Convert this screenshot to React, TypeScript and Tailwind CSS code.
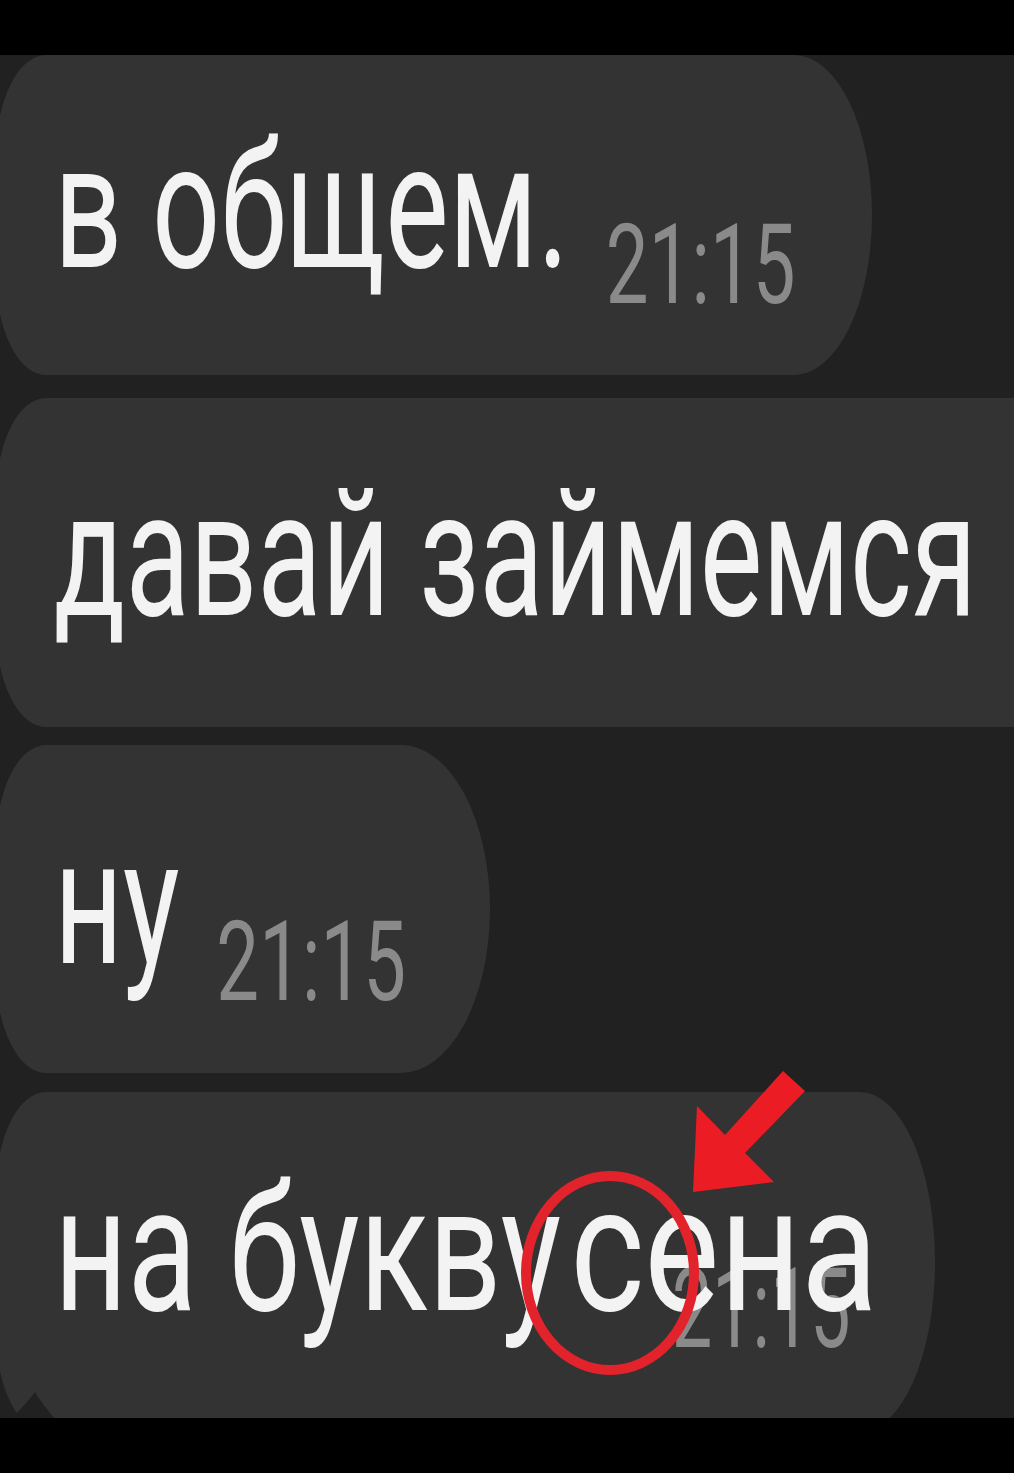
import React from 'react';

const bubbleBase = 'relative shrink-0 ml-[-4px] bg-[#333333] rounded-tl-[50px_100px] rounded-bl-[50px_100px]';
const rowBase = 'relative flex items-baseline whitespace-nowrap w-max origin-left';
const msgText = 'text-[176px] leading-none text-[#f3f3f3]';
const timeText = 'text-[112px] leading-none text-[#8a8a8a]';

export default function App() {
    return (
        <div className="w-[1014px] h-[1473px] bg-black overflow-hidden flex flex-col font-['Roboto','Noto_Sans',sans-serif]">
            <div className="h-[55px] shrink-0 bg-black" />

            <div className="flex-1 min-h-0 bg-[#212121] overflow-hidden flex flex-col">
                {/* в общем. */}
                <div className={`${bubbleBase} w-[876px] h-[320px] pt-[64px] pl-[58px] rounded-tr-[78px_160px] rounded-br-[78px_160px]`}>
                    <div className={`${rowBase} scale-x-[0.68] gap-[54px]`}>
                        <span className={msgText}>в общем.</span>
                        <span className={`${timeText} translate-y-[36px]`}>21:15</span>
                    </div>
                </div>

                {/* давай займемся */}
                <div className={`${bubbleBase} mt-[23px] w-[1100px] h-[329px] pt-[69px] pl-[58px]`}>
                    <div className={`${rowBase} scale-x-[0.672]`}>
                        <span className={msgText}>давай займемся</span>
                    </div>
                </div>

                {/* ну */}
                <div className={`${bubbleBase} mt-[18px] w-[494px] h-[328px] pt-[70px] pl-[58px] rounded-tr-[89px_164px] rounded-br-[89px_164px]`}>
                    <div className={`${rowBase} scale-x-[0.68] gap-[54px]`}>
                        <span className={msgText}>ну</span>
                        <span className={`${timeText} translate-y-[37px]`}>21:15</span>
                    </div>
                </div>

                {/* на букву сена */}
                <div className={`${bubbleBase} mt-[19px] w-[939px] h-[340px] pt-[70px] pl-[58px] rounded-tr-[75px_170px] rounded-br-[75px_170px] rounded-bl-[20px_40px]`}>
                    <span className={`absolute left-[676px] top-[161px] origin-left scale-x-[0.64] ${timeText}`}>21:15</span>
                    <div className={`${rowBase} scale-x-[0.725] gap-[12px]`}>
                        <span className={msgText}>на букву</span>
                        <span className={`${msgText} origin-left scale-x-[1.11]`}>сена</span>
                    </div>
                    <svg className="absolute left-0 top-0 overflow-visible pointer-events-none" width="939" height="340">
                        <g transform="translate(4,-1092)">
                            <path d="M10 1420 Q28 1402 35 1392 Q42 1404 56 1420 Z" fill="#212121" />
                            <ellipse cx="610" cy="1273" rx="84" ry="97" fill="none" stroke="#e2232b" strokeWidth="10" />
                            <polygon
                                points="693,1192 697,1106 725,1135 783,1071 805,1091 745,1153 774,1182"
                                fill="#ec1c24"
                            />
                        </g>
                    </svg>
                </div>
            </div>

            <div className="h-[55px] shrink-0 bg-black" />
        </div>
    );
}
